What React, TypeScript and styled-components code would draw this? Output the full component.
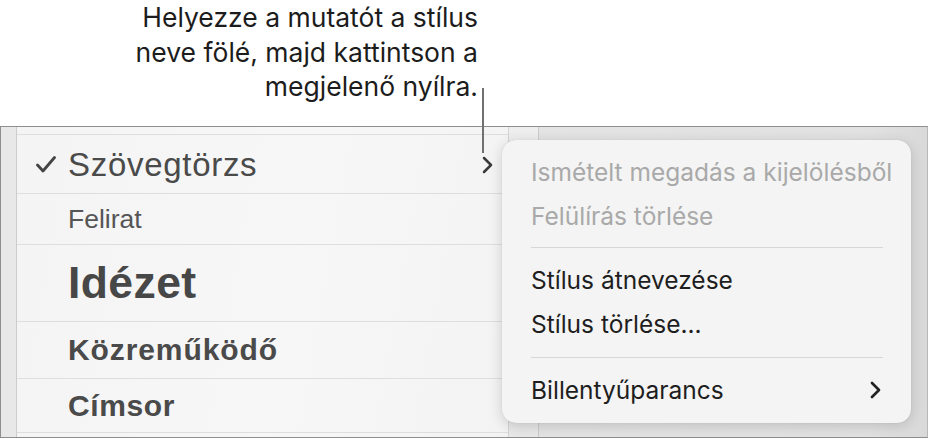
import React from "react";
import styled, { createGlobalStyle } from "styled-components";

const Global = createGlobalStyle`
  html, body { margin: 0; padding: 0; background: #ffffff; }
  body { width: 928px; height: 439px; overflow: hidden; }
  #root { width: 928px; height: 439px; }
`;

const Page = styled.div`
  position: relative;
  width: 928px;
  height: 439px;
  display: flex;
  flex-direction: column;
  background: #ffffff;
`;

const CaptionArea = styled.div`
  height: 126px;
  display: flex;
  justify-content: flex-end;
  align-items: flex-start;
  padding: 0 450px 0 0;
  box-sizing: border-box;
`;

const Caption = styled.div`
  font-family: "Inter", "Liberation Sans", sans-serif;
  font-size: 26.5px;
  line-height: 34.5px;
  color: #1c1c1c;
  text-align: right;
`;

const Leader = styled.div`
  position: absolute;
  left: 482px;
  top: 88px;
  width: 2px;
  height: 65px;
  background: #707070;
  z-index: 3;
`;

const Frame = styled.div`
  position: relative;
  height: 312px;
  box-sizing: border-box;
  border: 1px solid #8e8e8e;
  border-right-color: #b8b8b8;
  display: flex;
`;

const LeftStrip = styled.div`
  width: 15px;
  background: #e8e8e8;
  border-right: 1px solid #cdcdcd;
`;

const ListPanel = styled.div`
  width: 491px;
  display: flex;
  flex-direction: column;
  background: linear-gradient(100deg, #f4f4f4 0%, #f7f7f7 55%, #f3f3f3 100%);
`;

const Sliver = styled.div<{ $h: number; $line?: boolean }>`
  height: ${(p) => p.$h}px;
  flex: none;
  border-bottom: ${(p) => (p.$line ? "1px solid #dedede" : "none")};
`;

const Row = styled.div<{ $h: number }>`
  height: ${(p) => p.$h}px;
  flex: none;
  display: flex;
  align-items: center;
  padding: 0 15px 0 19px;
  border-bottom: 1px solid #dedede;
  font-family: "Liberation Sans", Arial, sans-serif;
  color: #4a4a4a;
`;

const CheckSlot = styled.div`
  width: 32px;
  flex: none;
  display: flex;
  align-items: center;
`;

const Label = styled.span<{ $size: number; $bold?: boolean; $ls?: number; $color?: string }>`
  font-size: ${(p) => p.$size}px;
  font-weight: ${(p) => (p.$bold ? 700 : 400)};
  letter-spacing: ${(p) => p.$ls ?? 0}px;
  color: ${(p) => p.$color ?? "#4a4a4a"};
  white-space: nowrap;
  line-height: 1;
`;

const RowChevron = styled.div`
  margin-left: auto;
  display: flex;
  align-items: center;
  padding-top: 2px;
`;

const MidStrip = styled.div`
  width: 29px;
  border-left: 1px solid #d4d4d4;
  background: linear-gradient(180deg, #eeeeee 0%, #e8e8e8 100%);
`;

const RightArea = styled.div`
  flex: 1;
  border-left: 1px solid #cbcbcb;
  background: linear-gradient(90deg, #e4e4e4 0%, #e2e2e2 85%, #d9d9d9 100%);
`;

const Popover = styled.div`
  position: absolute;
  left: 501px;
  top: 13px;
  width: 409px;
  height: 283px;
  box-sizing: border-box;
  border-radius: 14px;
  background: #f4f4f4;
  box-shadow: 0 3px 14px rgba(0, 0, 0, 0.16), 0 0 1px rgba(0, 0, 0, 0.18);
  padding: 10px 28px 0 29px;
  display: flex;
  flex-direction: column;
  z-index: 2;
`;

const MenuItem = styled.div<{ $disabled?: boolean }>`
  height: 44px;
  display: flex;
  align-items: center;
  font-family: "Inter", "Liberation Sans", sans-serif;
  font-size: 24.5px;
  color: ${(p) => (p.$disabled ? "#a9a9a9" : "#1e1e1e")};
  white-space: nowrap;
`;

const Separator = styled.div<{ $mt: number; $mb: number }>`
  height: 1px;
  background: #d6d6d6;
  margin: ${(p) => p.$mt}px 0 ${(p) => p.$mb}px 0;
`;

const MenuChevron = styled.span`
  margin-left: auto;
  margin-right: 2px;
  display: flex;
  align-items: center;
`;

const Chevron = ({ color, w }: { color: string; w: number }) => (
  <svg width="11" height="18" viewBox="0 0 11 18">
    <polyline
      points="2,2 9,9 2,16"
      fill="none"
      stroke={color}
      strokeWidth={w}
      strokeLinecap="round"
      strokeLinejoin="round"
    />
  </svg>
);

const Check = () => (
  <svg width="20" height="17" viewBox="0 0 20 17">
    <polyline
      points="1.5,9 7,15 18.5,1.5"
      fill="none"
      stroke="#444"
      strokeWidth="2.8"
      strokeLinecap="round"
      strokeLinejoin="round"
    />
  </svg>
);

export default function App() {
  return (
    <Page>
      <Global />
      <CaptionArea>
        <Caption>
          Helyezze a mutatót a stílus
          <br />
          neve fölé, majd kattintson a
          <br />
          megjelenő nyílra.
        </Caption>
      </CaptionArea>
      <Leader />
      <Frame>
        <LeftStrip />
        <ListPanel>
          <Sliver $h={7} $line />
          <Row $h={58}>
            <CheckSlot>
              <Check />
            </CheckSlot>
            <Label $size={33} $ls={0.7}>Szövegtörzs</Label>
            <RowChevron>
              <Chevron color="#3a3a3a" w={2.5} />
            </RowChevron>
          </Row>
          <Row $h={50}>
            <CheckSlot />
            <Label $size={26.5} $color="#555">Felirat</Label>
          </Row>
          <Row $h={76}>
            <CheckSlot />
            <Label $size={44.5} $bold $ls={0.4} $color="#474747">Idézet</Label>
          </Row>
          <Row $h={56}>
            <CheckSlot />
            <Label $size={30} $bold $ls={0.9} $color="#4a4a4a">Közreműködő</Label>
          </Row>
          <Row $h={53}>
            <CheckSlot />
            <Label $size={30} $bold $ls={0.6} $color="#4a4a4a">Címsor</Label>
          </Row>
          <Sliver $h={4} />
        </ListPanel>
        <MidStrip />
        <RightArea />
        <Popover>
          <MenuItem $disabled>Ismételt megadás a kijelölésből</MenuItem>
          <MenuItem $disabled>Felülírás törlése</MenuItem>
          <Separator $mt={9} $mb={10} />
          <MenuItem>Stílus átnevezése</MenuItem>
          <MenuItem>Stílus törlése...</MenuItem>
          <Separator $mt={11} $mb={10} />
          <MenuItem>
            Billentyűparancs
            <MenuChevron>
              <Chevron color="#222" w={2.7} />
            </MenuChevron>
          </MenuItem>
        </Popover>
      </Frame>
    </Page>
  );
}
